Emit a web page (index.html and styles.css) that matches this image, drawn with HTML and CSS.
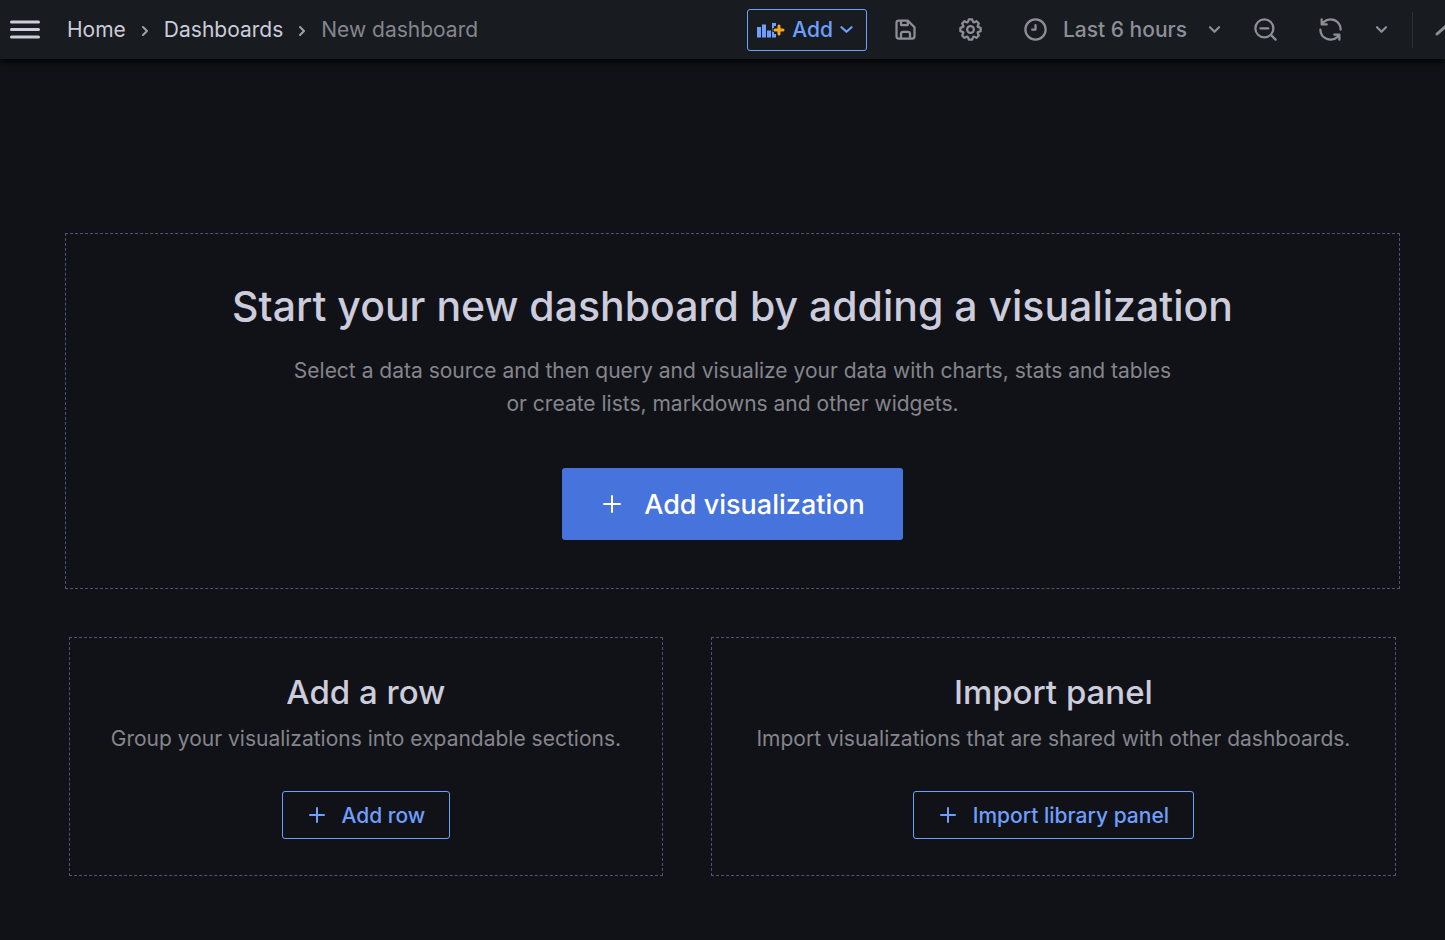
FILE: index.html
```html
<!DOCTYPE html>
<html lang="en">
<head>
  <meta charset="UTF-8">
  <meta name="viewport" content="width=device-width, initial-scale=1.0">
  <title>New dashboard</title>
  <link rel="stylesheet" href="styles.css">
</head>
<body>
  <header class="toolbar">
    <button class="icon-button menu" aria-label="Open menu">
      <svg width="30" height="20" viewBox="0 0 30 20"><path d="M1.5 2h27M1.5 9.500h27M1.5 17h27"/></svg>
    </button>
    <nav class="breadcrumbs" aria-label="Breadcrumbs">
      <a href="#">Home</a>
      <svg class="separator" width="8" height="12" viewBox="0 0 8 12"><path d="M2 3l4 4-4 4"/></svg>
      <a href="#">Dashboards</a>
      <svg class="separator" width="8" height="12" viewBox="0 0 8 12"><path d="M2 3l4 4-4 4"/></svg>
      <span class="current">New dashboard</span>
    </nav>

    <div class="actions">
      <button class="button outline add">
        <svg class="panel-add" width="28" height="18" viewBox="0 0 28 18">
          <path class="bars" d="M0 6h4v10.500H0zM5 3.500h4v13H5zM10 9.500h4v7h-4zM15 2h4v3h-2v2h-1.500v4H17v2h2v3.500h-4z"/>
          <path class="plus" d="M22 5v8M18 9h8"/>
        </svg>
        <span>Add</span>
        <svg class="line" width="27" height="27" viewBox="0 0 24 24"><path d="M7.500 10l4.500 4 4.500-4"/></svg>
      </button>
      <button class="icon-button save" aria-label="Save dashboard">
        <svg class="solid" width="27" height="27" viewBox="0 0 24 24"><path d="M20.710 9.290l-6-6a1 1 0 0 0-.32-.21A1.090 1.090 0 0 0 14 3H6A3 3 0 0 0 3 6V18a3 3 0 0 0 3 3H18a3 3 0 0 0 3-3V10A1 1 0 0 0 20.710 9.290ZM9 5h4V7H9Zm6 14H9V16a1 1 0 0 1 1-1h4a1 1 0 0 1 1 1Zm4-1a1 1 0 0 1-1 1H17V16a3 3 0 0 0-3-3H10a3 3 0 0 0-3 3v3H6a1 1 0 0 1-1-1V6A1 1 0 0 1 6 5H7V8A1 1 0 0 0 8 9h6a1 1 0 0 0 1-1V6.410l4 4Z"/></svg>
      </button>
      <button class="icon-button settings" aria-label="Dashboard settings">
        <svg class="solid" width="27" height="27" viewBox="0 0 24 24"><path d="M21.320 9.550l-1.890-.63.890-1.780A1 1 0 0 0 20.130 6L18 3.870a1 1 0 0 0-1.150-.19l-1.780.890-.63-1.890A1 1 0 0 0 13.500 2h-3a1 1 0 0 0-.95.680L8.920 4.570 7.140 3.680A1 1 0 0 0 6 3.870L3.870 6a1 1 0 0 0-.19 1.150l.890 1.780-1.890.630A1 1 0 0 0 2 10.500v3a1 1 0 0 0 .68.950l1.890.630-.89 1.780A1 1 0 0 0 3.870 18L6 20.130a1 1 0 0 0 1.150.190l1.780-.89.630 1.890a1 1 0 0 0 .95.680h3a1 1 0 0 0 .95-.68l.630-1.890 1.780.890A1 1 0 0 0 18 20.130L20.130 18a1 1 0 0 0 .19-1.150l-.89-1.780 1.890-.63A1 1 0 0 0 22 13.500v-3A1 1 0 0 0 21.320 9.550ZM20 12.780l-1.200.400A2 2 0 0 0 17.640 16l.570 1.140-1.100 1.100L16 17.640a2 2 0 0 0-2.790 1.160l-.4 1.200H11.220l-.4-1.200A2 2 0 0 0 8 17.640l-1.140.570-1.100-1.100L6.360 16A2 2 0 0 0 5.200 13.180L4 12.780V11.220l1.200-.4A2 2 0 0 0 6.360 8L5.790 6.890l1.100-1.100L8 6.360A2 2 0 0 0 10.820 5.200l.4-1.200h1.560l.4 1.200A2 2 0 0 0 16 6.360l1.140-.57 1.100 1.100L17.640 8a2 2 0 0 0 1.160 2.790l1.200.400ZM12 8a4 4 0 1 0 4 4A4 4 0 0 0 12 8Zm0 6a2 2 0 1 1 2-2A2 2 0 0 1 12 14Z"/></svg>
      </button>
      <button class="icon-button time-picker">
        <svg class="line" width="27" height="27" viewBox="0 0 24 24"><circle cx="12" cy="12" r="9"/><path d="M12 8v4H9"/></svg>
        <span>Last 6 hours</span>
        <svg class="line" width="27" height="27" viewBox="0 0 24 24"><path d="M8 10l4 4 4-4"/></svg>
      </button>
      <button class="icon-button zoom-out" aria-label="Zoom out time range">
        <svg class="line" width="27" height="27" viewBox="0 0 24 24"><circle cx="11" cy="11" r="8"/><path d="M7.500 11h7M17 17l4 4"/></svg>
      </button>
      <button class="icon-button refresh" aria-label="Refresh dashboard">
        <svg class="solid" width="27" height="27" viewBox="0 0 24 24"><path d="M19.910 15.510H15.380a1 1 0 0 0 0 2h2.400A8 8 0 0 1 4 12a1 1 0 0 0-2 0 10 10 0 0 0 16.880 7.230V21a1 1 0 0 0 2 0V16.500A1 1 0 0 0 19.910 15.510ZM12 2A10 10 0 0 0 5.120 4.770V3a1 1 0 0 0-2 0V7.500a1 1 0 0 0 1 1h4.500a1 1 0 0 0 0-2H6.220A8 8 0 0 1 20 12a1 1 0 0 0 2 0A10 10 0 0 0 12 2Z"/></svg>
      </button>
      <button class="icon-button interval" aria-label="Auto refresh interval">
        <svg class="line" width="27" height="27" viewBox="0 0 24 24"><path d="M8 10l4 4 4-4"/></svg>
      </button>
      <span class="divider"></span>
      <button class="icon-button collapse" aria-label="Toggle top search bar">
        <svg width="22" height="14" viewBox="0 0 22 14"><path d="M2 11l9-8 9 8"/></svg>
      </button>
    </div>
  </header>

  <main class="empty-dashboard">
    <section class="card main-card">
      <h1>Start your new dashboard by adding a visualization</h1>
      <p>Select a data source and then query and visualize your data with charts, stats and tables or create lists, markdowns and other widgets.</p>
      <button class="button primary">
        <svg width="20" height="20" viewBox="0 0 20 20"><path d="M10 2v16M2 10h16"/></svg>
        <span>Add visualization</span>
      </button>
    </section>

    <div class="card-row">
      <section class="card">
        <h2>Add a row</h2>
        <p>Group your visualizations into expandable sections.</p>
        <button class="button outline">
          <svg width="18" height="18" viewBox="0 0 18 18"><path d="M9 2v14M2 9h14"/></svg>
          <span>Add row</span>
        </button>
      </section>
      <section class="card">
        <h2>Import panel</h2>
        <p>Import visualizations that are shared with other dashboards.</p>
        <button class="button outline">
          <svg width="18" height="18" viewBox="0 0 18 18"><path d="M9 2v14M2 9h14"/></svg>
          <span>Import library panel</span>
        </button>
      </section>
    </div>
  </main>
</body>
</html>
```
FILE: styles.css
```css
* {
  box-sizing: border-box;
}

body {
  margin: 0;
  background-color: #111217;
  color: #ccccdc;
  font-family: Inter, "Liberation Sans", sans-serif;
  font-size: 21px;
  line-height: 33px;
}

h1, h2, p {
  margin: 0;
}

button {
  font: inherit;
  cursor: pointer;
}

svg {
  display: block;
  flex-shrink: 0;
  fill: none;
  stroke: currentColor;
  stroke-width: 2;
  stroke-linecap: round;
  stroke-linejoin: round;
}

svg.solid {
  fill: currentColor;
  stroke: none;
}

/* Top toolbar */
.toolbar {
  display: flex;
  align-items: center;
  height: 59px;
  padding-left: 10px;
  background-color: #181b1f;
  box-shadow: 0 2px 8px #000000;
  overflow-x: clip;
}

.icon-button {
  display: flex;
  align-items: center;
  padding: 0;
  border: none;
  background: none;
  color: #8e8e99;
  font-weight: 500;
}

.menu {
  color: #ccccdc;
}

.menu svg {
  stroke-width: 3;
}

.breadcrumbs {
  display: flex;
  align-items: center;
  gap: 15px;
  margin-left: 27px;
  white-space: nowrap;
}

.breadcrumbs a {
  color: #ccccdc;
  text-decoration: none;
}

.breadcrumbs a:hover {
  text-decoration: underline;
}

.separator {
  color: #a0a0ac;
}

.current {
  color: #85868f;
}

.actions {
  display: flex;
  align-items: center;
  margin-left: auto;
  white-space: nowrap;
}

.save {
  margin-left: 25px;
}

.settings {
  margin-left: 38px;
}

.time-picker {
  gap: 14px;
  margin-left: 38px;
}

.zoom-out {
  margin-left: 24px;
}

.refresh {
  margin-left: 38px;
}

.interval {
  margin-left: 24px;
}

.divider {
  width: 1px;
  height: 36px;
  margin-left: 17px;
  background-color: #2e3036;
}

/* runs past the right edge of the window */
.collapse {
  margin-left: 22px;
  margin-right: -12px;
}

.collapse svg {
  stroke-width: 3;
}

/* Buttons */
.button {
  display: inline-flex;
  align-items: center;
  border-radius: 3px;
  font-weight: 500;
}

.outline {
  gap: 16px;
  height: 48px;
  padding: 0 24px 0 25px;
  border: 1px solid #6e9fff;
  background: none;
  color: #6e9fff;
}

.outline:hover {
  background-color: #1a2236;
}

.primary {
  gap: 22px;
  height: 72px;
  padding: 0 38px 0 40px;
  border: none;
  background-color: #4773dc;
  color: #ffffff;
  font-size: 27px;
}

.primary:hover {
  background-color: #5a82e0;
}

.add {
  gap: 7px;
  height: 42px;
  padding: 0 6px 0 9px;
}

.add .line {
  margin-left: -7px;
}

.bars {
  fill: #6e9fff;
  stroke: none;
}

.plus {
  stroke: #f5a623;
  stroke-width: 3;
}

/* Empty dashboard */
.empty-dashboard {
  display: flex;
  flex-direction: column;
  gap: 48px;
  padding: 174px 45px 48px 65px;
}

.card {
  display: flex;
  flex-direction: column;
  align-items: center;
  padding: 36px;
  border: 1px dashed #4a5578;
  text-align: center;
}

.card p {
  color: #85858d;
}

.card h2 {
  margin-bottom: 12px;
  font-size: 33px;
  font-weight: 500;
  line-height: 36px;
}

.card .outline {
  margin-top: 36px;
}

.main-card {
  padding: 48px;
}

.main-card h1 {
  margin-bottom: 24px;
  font-size: 41px;
  font-weight: 500;
  line-height: 48px;
}

.main-card p {
  max-width: 900px;
}

.main-card .primary {
  margin-top: 48px;
}

.card-row {
  display: grid;
  grid-template-columns: 13fr 15fr;
  gap: 48px;
  padding: 0 4px;
}
```
